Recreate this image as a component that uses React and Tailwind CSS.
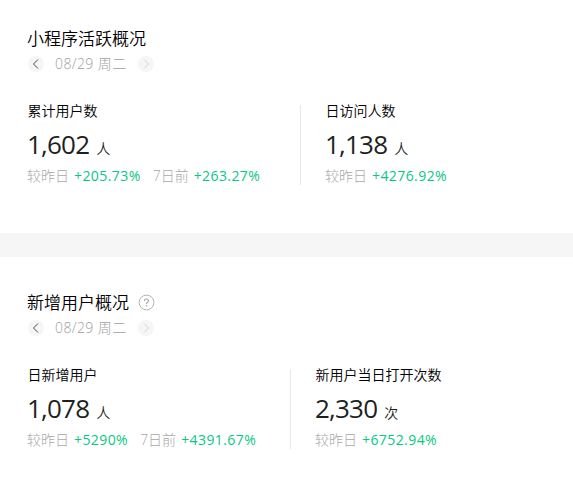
import React from "react";

const cards = [
  {
    title: "小程序活跃概况",
    help: false,
    spacing: "h-[233px] pt-[27px]",
    metrics: [
      {
        label: "累计用户数",
        value: "1,602",
        unit: "人",
        width: "w-[273px]",
        changes: [
          { name: "较昨日", rate: "+205.73%" },
          { name: "7日前", rate: "+263.27%" },
        ],
      },
      {
        label: "日访问人数",
        value: "1,138",
        unit: "人",
        width: "",
        changes: [{ name: "较昨日", rate: "+4276.92%" }],
      },
    ],
  },
  {
    title: "新增用户概况",
    help: true,
    spacing: "flex-1 pt-[34px]",
    metrics: [
      {
        label: "日新增用户",
        value: "1,078",
        unit: "人",
        width: "w-[263px]",
        changes: [
          { name: "较昨日", rate: "+5290%" },
          { name: "7日前", rate: "+4391.67%" },
        ],
      },
      {
        label: "新用户当日打开次数",
        value: "2,330",
        unit: "次",
        width: "",
        changes: [{ name: "较昨日", rate: "+6752.94%" }],
      },
    ],
  },
];

function HelpIcon() {
  return (
    <svg width="17" height="17" viewBox="0 0 17 17" fill="none" className="mb-0.5 ml-[9px]">
      <circle cx="8.5" cy="8.5" r="7.4" stroke="#b2b2b2" />
      <path
        d="M6.5 6.9c0-1.2.8-1.9 2-1.9s2 .7 2 1.8c0 1.4-2 1.5-2 3.1"
        stroke="#a8a8a8"
        strokeWidth="1.1"
      />
      <circle cx="8.5" cy="11.7" r=".8" fill="#a8a8a8" />
    </svg>
  );
}

function ArrowButton({ direction, disabled }) {
  return (
    <button
      disabled={disabled}
      className={`flex size-4 items-center justify-center rounded-full bg-[#f6f6f6] ${
        disabled ? "text-[#d4d4d4]" : "text-[#444444]"
      }`}
    >
      <svg width="16" height="16" viewBox="0 0 16 16" fill="none" stroke="currentColor">
        <path d={direction === "left" ? "M10 3.5 5.5 8l4.5 4.5" : "M6 3.5 10.5 8 6 12.5"} />
      </svg>
    </button>
  );
}

function Metric({ label, value, unit, width, changes }) {
  return (
    <div className={`h-20 shrink-0 ${width}`}>
      <div className="h-[14px] pl-[0.5px] text-[14px] leading-[12px]">{label}</div>
      <div className="mt-[9px] flex h-[32px] items-baseline leading-[32px] text-[#1f1f1f]">
        <span className="text-[26px] font-normal tracking-[-0.8px]">{value}</span>
        <span className="ml-[7px] text-[14px]">{unit}</span>
      </div>
      <div className="mt-[6px] flex h-[20px] text-[14px] leading-[20px]">
        {changes.map((change) => (
          <span key={change.name} className="mr-3 font-light text-[#a8a8a8]">
            {change.name}
            <span className="ml-[5px] font-normal tracking-[0.42px] text-[#07c983]">
              {change.rate}
            </span>
          </span>
        ))}
      </div>
    </div>
  );
}

function Card({ title, help, spacing, metrics }) {
  return (
    <section className={`shrink-0 bg-white pl-[27px] ${spacing}`}>
      <div className="flex h-6 items-center text-[17px] leading-6">
        <h2>{title}</h2>
        {help && <HelpIcon />}
      </div>
      <div className="mt-[4px] ml-px flex h-[18px] items-center">
        <ArrowButton direction="left" />
        <span className="mr-[11px] ml-[11px] text-[14px] leading-[18px] font-light tracking-[0.4px] text-[#a0a0a0]">
          08/29 周二
        </span>
        <ArrowButton direction="right" disabled />
      </div>
      <div className="mt-[32px] flex">
        <Metric {...metrics[0]} />
        <div className="mr-6 h-20 w-px bg-[#e7e7eb]" />
        <Metric {...metrics[1]} />
      </div>
    </section>
  );
}

export default function App() {
  return (
    <div className="flex h-[482px] w-[573px] flex-col gap-6 overflow-hidden whitespace-nowrap bg-[#f6f6f6] font-['Open_Sans','Noto_Sans_CJK_SC',sans-serif] font-[350] text-black">
      {cards.map((card) => (
        <Card key={card.title} {...card} />
      ))}
    </div>
  );
}
